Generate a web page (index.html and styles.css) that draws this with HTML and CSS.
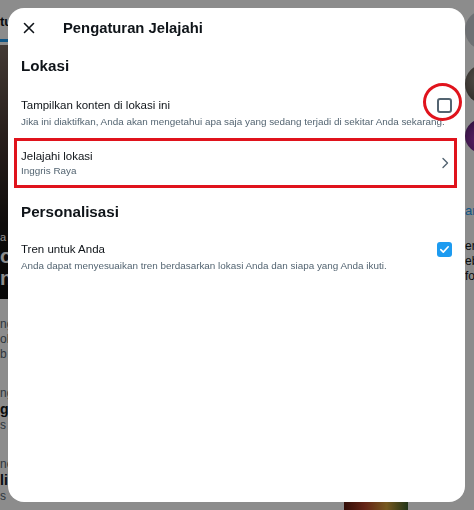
FILE: index.html
```html
<!DOCTYPE html>
<html lang="id">
<head>
<meta charset="utf-8">
<title>Pengaturan Jelajahi</title>
<link rel="stylesheet" href="styles.css">
</head>
<body>
<div class="page">
  <div class="main">
    <div class="tabs">tu</div>
    <div class="tab-line"></div>
    <div class="hero">
      <span class="hero-small">a</span>
      <span class="hero-big">o</span>
      <span class="hero-big">n</span>
    </div>
    <div class="trend"><span class="t-sub">ng</span><span class="t-sub">ol</span><span class="t-sub">b</span></div>
    <div class="trend"><span class="t-sub">ng</span><span class="t-bold">g</span><span class="t-sub">s</span></div>
    <div class="trend"><span class="t-sub">ne</span><span class="t-bold">li</span><span class="t-sub">s</span></div>
  </div>
  <div class="middle"></div>
  <div class="side">
    <div class="av av1"></div>
    <div class="av av2"></div>
    <div class="av av3"></div>
    <div class="side-link">ar</div>
    <div class="side-text first-text">ers</div>
    <div class="side-text">eb</div>
    <div class="side-text">fo</div>
  </div>
  <div class="bottom-img"></div>
</div>

<div class="overlay">
  <div class="modal">
    <div class="header">
      <svg class="close" width="12" height="12" viewBox="0 0 12 12" aria-hidden="true">
        <path d="M1.5 1.5 L10.5 10.5 M10.5 1.5 L1.5 10.5" stroke="#0f1419" stroke-width="1.6" stroke-linecap="round" fill="none"/>
      </svg>
      <h1 class="title">Pengaturan Jelajahi</h1>
    </div>

    <h2 class="section first">Lokasi</h2>

    <div class="row">
      <div class="line">
        <span class="label">Tampilkan konten di lokasi ini</span>
        <span class="box"></span>
      </div>
      <div class="sub">Jika ini diaktifkan, Anda akan mengetahui apa saja yang sedang terjadi di sekitar Anda sekarang.</div>
    </div>

    <div class="row link-row">
      <div class="link-text">
        <span class="label">Jelajahi lokasi</span>
        <span class="sub">Inggris Raya</span>
      </div>
      <svg class="chev" width="8" height="12" viewBox="0 0 8 12" aria-hidden="true">
        <path d="M2 1.5 L6.5 6 L2 10.5" stroke="#536471" stroke-width="1.4" fill="none" stroke-linecap="round" stroke-linejoin="round"/>
      </svg>
      <span class="mark-rect"></span>
    </div>

    <h2 class="section second">Personalisasi</h2>

    <div class="row">
      <div class="line">
        <span class="label">Tren untuk Anda</span>
        <span class="box checked">
          <svg width="15" height="15" viewBox="0 0 15 15" aria-hidden="true">
            <path d="M3.8 7.6 L6.3 10.1 L11.2 4.8" stroke="#ffffff" stroke-width="1.6" fill="none" stroke-linecap="round" stroke-linejoin="round"/>
          </svg>
        </span>
      </div>
      <div class="sub">Anda dapat menyesuaikan tren berdasarkan lokasi Anda dan siapa yang Anda ikuti.</div>
    </div>

    <span class="mark-circle"></span>
  </div>
</div>
</body>
</html>
```

FILE: styles.css
```css
* { box-sizing: border-box; }

html, body {
  margin: 0;
  padding: 0;
  width: 474px;
  height: 510px;
  overflow: hidden;
  font-family: "Liberation Sans", Arial, sans-serif;
  color: #0f1419;
  background: #ffffff;
}

/* ---------- background page ---------- */
.page {
  display: flex;
  width: 474px;
  height: 510px;
  position: relative;
}

.main {
  width: 9px;
  flex: none;
  display: flex;
  flex-direction: column;
  overflow: hidden;
}

.middle { flex: 1; }

.tabs {
  height: 39px;
  padding-top: 14px;
  font-size: 13px;
  font-weight: bold;
  line-height: 16px;
}

.tab-line {
  height: 3px;
  background: #1d9bf0;
}

.hero {
  height: 256px;
  margin-top: 3px;
  background: linear-gradient(170deg, #7a6a60 0%, #4a3a34 35%, #1d1715 70%, #0c0c0c 100%);
  display: flex;
  flex-direction: column;
  justify-content: flex-end;
  padding-bottom: 10px;
  color: #fff;
}

.hero-small { font-size: 11px; line-height: 16px; }
.hero-big { font-size: 20px; font-weight: bold; line-height: 22px; }

.trend {
  display: flex;
  flex-direction: column;
  padding: 18px 0 6px 0;
}
.t-sub { font-size: 12px; color: #536471; line-height: 15px; }
.t-bold { font-size: 14px; font-weight: bold; line-height: 17px; }

.side {
  width: 9px;
  flex: none;
  display: flex;
  flex-direction: column;
  overflow: hidden;
  padding-top: 10px;
}

.av {
  width: 40px;
  height: 40px;
  border-radius: 50%;
  flex: none;
  margin: 0 0 14px 0;
}
.av1 { background: #c9ccd1; }
.av2 { background: radial-gradient(circle at 40% 40%, #9a9288, #3a332e); }
.av3 { background: radial-gradient(circle at 40% 60%, #b23fc6, #2a1546); height: 36px; }

.side-link { color: #1d9bf0; font-size: 13px; line-height: 16px; margin-top: 35px; }
.side-text { font-size: 12px; line-height: 15px; white-space: nowrap; }
.side-text.first-text { margin-top: 20px; }

.bottom-img {
  position: absolute;
  left: 344px;
  top: 500px;
  width: 64px;
  height: 20px;
  background: linear-gradient(90deg, #5b1a0e, #b8442a, #d7a23a, #3b5e2b);
}

/* ---------- overlay + modal ---------- */
.overlay {
  position: fixed;
  inset: 0;
  background: rgba(0, 0, 0, 0.45);
  display: flex;
  padding: 8px 9px 8px 8px;
}

.modal {
  flex: 1;
  background: #ffffff;
  border-radius: 16px;
  position: relative;
  display: flex;
  flex-direction: column;
}

.header {
  height: 40px;
  display: flex;
  align-items: center;
  padding-left: 15px;
}

.close { flex: none; }

.title {
  margin: 0 0 0 28px;
  font-size: 14.8px;
  font-weight: bold;
  line-height: 20px;
}

.section {
  margin: 0;
  padding: 0 13px;
  font-size: 15.2px;
  font-weight: bold;
  line-height: 20px;
}
.section.first { margin-top: 8px; margin-bottom: 12px; }
.section.second { margin-top: 14px; margin-bottom: 10px; }

.row {
  padding: 9px 13px 9px 13px;
  display: flex;
  flex-direction: column;
  position: relative;
}

.line {
  display: flex;
  align-items: center;
  justify-content: space-between;
  height: 16px;
}

.label {
  font-size: 11.5px;
  line-height: 16px;
  color: #0f1419;
}

.sub {
  font-size: 9.9px;
  line-height: 15px;
  color: #536471;
  white-space: nowrap;
  margin-top: 1px;
}

.box {
  width: 15px;
  height: 15px;
  border: 2px solid #536471;
  border-radius: 3px;
  flex: none;
  display: flex;
}

.box.checked {
  border: none;
  background: #1d9bf0;
}

.link-row {
  flex-direction: row;
  align-items: center;
  justify-content: space-between;
  padding: 10px 16px 10px 13px;
}

.link-text {
  display: flex;
  flex-direction: column;
}
.link-text .sub { margin-top: 0; line-height: 14px; }

/* ---------- red annotations ---------- */
.mark-rect {
  position: absolute;
  left: 6px;
  right: 8px;
  top: 0;
  bottom: 0;
  border: 3px solid #e0131c;
}

.mark-circle {
  position: absolute;
  left: 415px;
  top: 75px;
  width: 39px;
  height: 38px;
  border: 3px solid #e0131c;
  border-radius: 50%;
}
```
